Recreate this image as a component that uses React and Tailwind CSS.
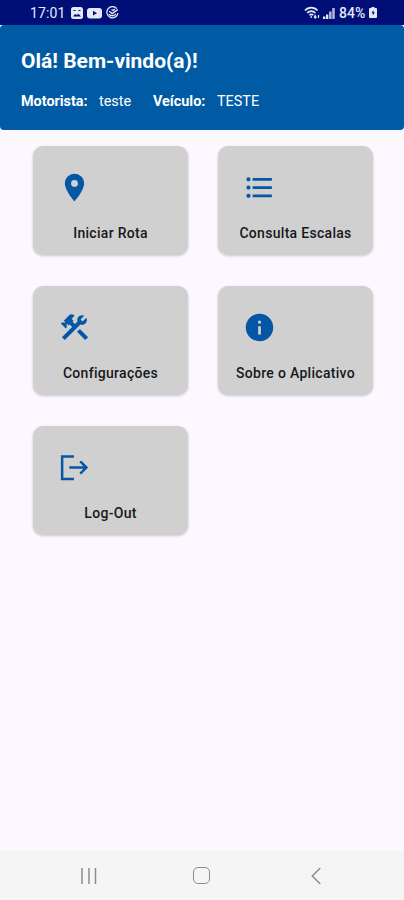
import React from 'react';
import { MdLocationOn, MdFormatListBulleted, MdConstruction, MdInfo } from 'react-icons/md';

const LogoutIcon = ({ className }) => (
  <svg viewBox="0 0 24 24" fill="none" stroke="currentColor" strokeWidth="1.8" className={className}>
    <path d="M11.6 4H3v16.3h8.6" />
    <path d="M8.2 12h12.5M16.2 7.5l4.5 4.5-4.5 4.5" />
  </svg>
);

const menuItems = [
  { label: 'Iniciar Rota', icon: MdLocationOn },
  { label: 'Consulta Escalas', icon: MdFormatListBulleted },
  { label: 'Configurações', icon: MdConstruction },
  { label: 'Sobre o Aplicativo', icon: MdInfo },
  { label: 'Log-Out', icon: LogoutIcon },
];

const StatusBar = () => (
  <div className="flex h-[25px] items-center justify-between bg-[#000f78] pl-[30px] pr-[27px] text-[#e6e9f5]">
    <div className="flex items-center">
      <span className="w-[35px] whitespace-nowrap text-[14px] leading-none tracking-[0.1px]">17:01</span>
      <svg viewBox="0 0 12 12" className="ml-[6px] h-3 w-3">
        <rect width="12" height="12" rx="2.5" fill="currentColor" />
        <path d="M2 9.5L4 7l2 1 1.5-1.2L10 9.5z" fill="#000f78" />
        <path d="M2.5 3.5h2M7.5 3.5h2" stroke="#000f78" strokeWidth="1.2" />
      </svg>
      <svg viewBox="0 0 15 12" className="ml-1 h-3 w-[15px]">
        <rect y="1" width="15" height="10.5" rx="3" fill="currentColor" />
        <path d="M6 3.8l4 2.4-4 2.4z" fill="#000f78" />
      </svg>
      <svg viewBox="0 0 13 13" fill="none" stroke="currentColor" strokeWidth="1.3" className="ml-1 h-[13px] w-[13px]">
        <path d="M10.8 2.6A5.6 5.6 0 1 0 12 7.2M3.2 5.2l3 2.4 5.6-4M3 8.3c2 2 5 2 7-.5M5.5 3.5l1.500 1 2-1.4" />
      </svg>
    </div>
    <div className="flex items-center">
      <svg viewBox="0 0 16 13" fill="none" stroke="currentColor" strokeWidth="1.7" className="h-[13px] w-4">
        <path d="M1 4.5C4.5.6 10 .6 13.5 4.5M3.2 7c2.3-2.6 5.8-2.6 8.1 0M5.5 9.3c1-1.2 2.6-1.2 3.6 0" />
        <path d="M7.2 10v2M11.2 8.5V12M9.9 10.6l1.3 1.4 1.3-1.4M14.5 12V9" strokeWidth="1.2" />
      </svg>
      <svg viewBox="0 0 12 12" fill="currentColor" className="ml-[3px] h-3 w-3">
        <path d="M0 9.5h2.3V12H0zM3 7.5h2.3V12H3z" />
        <path d="M6 4.5h2.6V12H6zM9.2 1h2.6v11H9.2z" opacity=".75" />
      </svg>
      <span className="ml-1 w-[29px] whitespace-nowrap text-[14px] font-medium leading-none">84%</span>
      <svg viewBox="0 0 8 11" className="ml-px h-[11px] w-2">
        <path d="M2.5 0h3v1H7a1 1 0 0 1 1 1v8a1 1 0 0 1-1 1H1a1 1 0 0 1-1-1V2a1 1 0 0 1 1-1h1.5z" fill="currentColor" />
        <path d="M4.5 3L2.5 6.3h1.4v2.2l1.9-3.2H4.5z" fill="#000f78" />
      </svg>
    </div>
  </div>
);

const MenuCard = ({ label, icon: Icon }) => (
  <button className="flex h-[109px] flex-col rounded-[10px] bg-[#d0d0d0] pt-[25px] shadow-[0_1px_3px_rgba(0,0,0,0.2)]">
    <Icon className="ml-[25px] h-[33px] w-[33px] text-[#0557a6]" />
    <span className="mt-[19px] w-full whitespace-nowrap text-center text-[14px] font-medium leading-5 tracking-[0.3px] text-[#17181c]">
      {label}
    </span>
  </button>
);

const App = () => {
  return (
    <div className="flex h-[900px] w-[404px] flex-col overflow-hidden bg-[#fdf7ff] font-[Roboto,sans-serif]">
      <StatusBar />
      <header className="h-[105px] rounded-[4px] bg-[#005aa4] px-[21px] pt-[24px] text-white">
        <h1 className="text-[21px] font-bold leading-6">Olá! Bem-vindo(a)!</h1>
        <div className="mt-[19px] flex whitespace-nowrap text-[14.4px] leading-5">
          <span className="w-[78px] font-bold">Motorista:</span>
          <span className="w-[54px]">teste</span>
          <span className="w-[64px] font-bold">Veículo:</span>
          <span>TESTE</span>
        </div>
      </header>
      <main className="grid flex-1 grid-cols-2 content-start gap-x-[30px] gap-y-[31px] pl-[33px] pr-[31px] pt-[16px]">
        {menuItems.map((item) => (
          <MenuCard key={item.label} label={item.label} icon={item.icon} />
        ))}
      </main>
      <nav className="flex h-[49px] items-center bg-[#f5f5f5] pl-[80px] text-[#8c8c8c]">
        <svg viewBox="0 0 18 18" fill="none" stroke="currentColor" strokeWidth="1.5" className="h-[18px] w-[18px]">
          <path d="M2 1v16M9 1v16M15.5 1v16" />
        </svg>
        <div className="ml-[95px] h-[17px] w-[17px] rounded-[5px] border-[1.5px] border-current"></div>
        <svg viewBox="0 0 10 18" fill="none" stroke="currentColor" strokeWidth="1.5" className="ml-[101px] h-[18px] w-[10px]">
          <path d="M9.3 1l-8 8 8 8" />
        </svg>
      </nav>
    </div>
  );
};

export default App;
